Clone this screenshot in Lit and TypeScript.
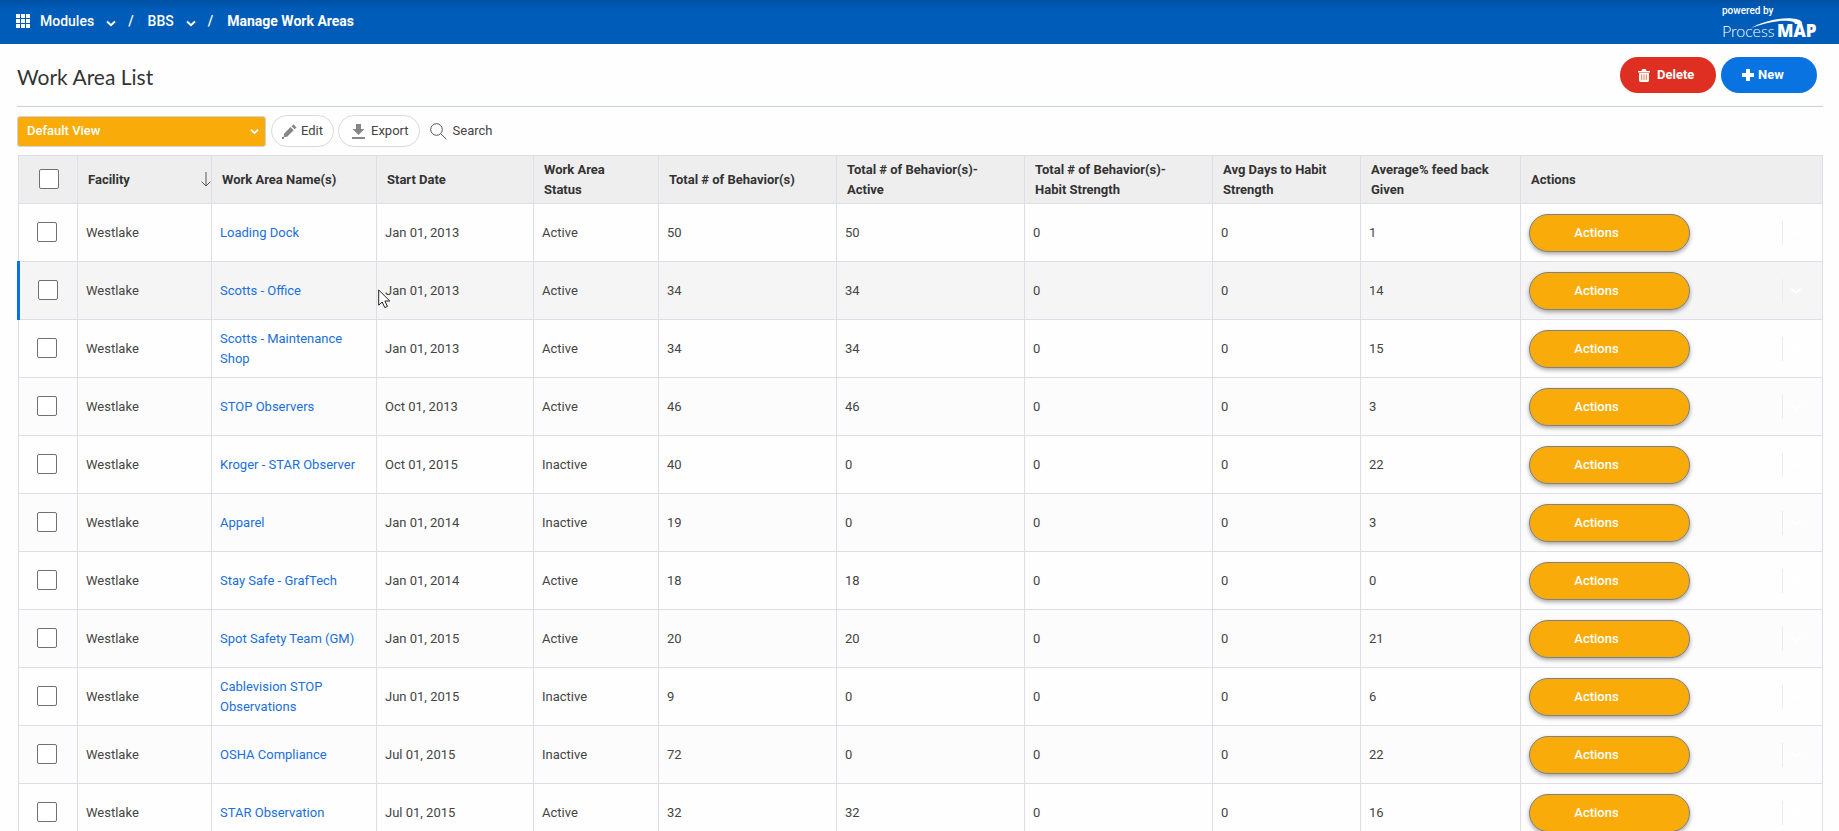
import { LitElement, html, svg, css } from "lit";
import { customElement, state } from "lit/decorators.js";
import { classMap } from "lit/directives/class-map.js";

interface WorkArea {
  name: string;
  start: string;
  status: string;
  total: number;
  active: number;
  feedback: number;
}

const area = (
  name: string,
  start: string,
  status: string,
  total: number,
  active: number,
  feedback: number
): WorkArea => ({ name, start, status, total, active, feedback });

const AREAS: WorkArea[] = [
  area("Loading Dock", "Jan 01, 2013", "Active", 50, 50, 1),
  area("Scotts - Office", "Jan 01, 2013", "Active", 34, 34, 14),
  area("Scotts - Maintenance Shop", "Jan 01, 2013", "Active", 34, 34, 15),
  area("STOP Observers", "Oct 01, 2013", "Active", 46, 46, 3),
  area("Kroger - STAR Observer", "Oct 01, 2015", "Inactive", 40, 0, 22),
  area("Apparel", "Jan 01, 2014", "Inactive", 19, 0, 3),
  area("Stay Safe - GrafTech", "Jan 01, 2014", "Active", 18, 18, 0),
  area("Spot Safety Team (GM)", "Jan 01, 2015", "Active", 20, 20, 21),
  area("Cablevision STOP Observations", "Jun 01, 2015", "Inactive", 9, 0, 6),
  area("OSHA Compliance", "Jul 01, 2015", "Inactive", 72, 0, 22),
  area("STAR Observation", "Jul 01, 2015", "Active", 32, 32, 16),
];

const chevron = svg`<path d="M1 1.5 L5 5.2 L9 1.5" fill="none" stroke="currentColor" stroke-width="2" />`;

@customElement("app-root")
export class AppRoot extends LitElement {
  @state() private hovered = 1;

  static styles = css`
    :host {
      display: block;
      height: 100vh;
      overflow: hidden;
      background: #fefefe;
      color: #444;
      font: 13px/20px Roboto, sans-serif;
    }
    button,
    select {
      font: inherit;
      margin: 0;
      cursor: pointer;
    }
    a {
      color: #1a6fdc;
      text-decoration: none;
    }
    svg {
      display: block;
      flex: none;
    }
    .topbar {
      display: flex;
      justify-content: space-between;
      height: 44px;
      padding: 0 16px;
      background: linear-gradient(#0051a4, #005cb9 10px);
      color: #fff;
    }
    .crumbs {
      display: flex;
      align-items: center;
      height: 42px;
      font-size: 14px;
      font-weight: 500;
    }
    .crumb {
      display: flex;
      align-items: center;
      gap: 12px;
      padding: 0;
      border: 0;
      background: none;
      color: inherit;
    }
    .crumb svg {
      margin-top: 4px;
    }
    .modules {
      margin-left: 10px;
    }
    .slash {
      margin: 0 14px 0 12px;
    }
    .here {
      font-weight: 700;
    }
    .brand {
      padding-top: 4px;
      width: 101px;
      font-size: 10px;
      font-weight: 500;
      line-height: 14px;
    }
    .page {
      padding: 0 16px 0 17px;
    }
    .titlebar {
      display: flex;
      align-items: center;
      justify-content: space-between;
      height: 62px;
      border-bottom: 1px solid #cbd0d4;
    }
    h1 {
      margin: 4px 0 0;
      font: 400 21px/28px Lato, sans-serif;
      color: #333;
    }
    .buttons {
      display: flex;
      gap: 5px;
      margin-right: 6px;
    }
    .pill {
      display: flex;
      align-items: center;
      height: 36px;
      width: 96px;
      padding: 0 18px;
      border: 0;
      border-radius: 18px;
      color: #fff;
      font-weight: 700;
    }
    .delete {
      gap: 7px;
      background: #df2e22;
    }
    .new {
      gap: 4px;
      padding-left: 21px;
      background: #0974e1;
    }
    .tools {
      display: flex;
      align-items: center;
      height: 48px;
    }
    .view {
      position: relative;
      width: 249px;
      margin-right: 5px;
    }
    .view select {
      appearance: none;
      display: block;
      width: 100%;
      height: 31px;
      padding: 0 9px;
      border: 1px solid #d3d3d8;
      border-radius: 3px;
      background: #f9ab0a;
      color: #fff;
      font-weight: 500;
    }
    .view svg {
      position: absolute;
      right: 7px;
      top: 12px;
      color: #fff;
      pointer-events: none;
    }
    .tool {
      display: flex;
      align-items: center;
      height: 32px;
      padding: 0 10px;
      margin-right: 4px;
      border: 1px solid #d8dbde;
      border-radius: 16px;
      background: #fff;
      color: #444;
    }
    .edit {
      gap: 4px;
    }
    .export {
      gap: 6px;
      padding: 0 10px 0 13px;
    }
    .search {
      gap: 6px;
      padding: 0 6px;
      border: 0;
      background: none;
    }
    table {
      width: 100%;
      table-layout: fixed;
      border-collapse: collapse;
    }
    th,
    td {
      box-sizing: border-box;
      border: 1px solid #dcdfe3;
      text-align: left;
      padding: 0 8px;
    }
    th {
      height: 48px;
      padding: 0 24px 0 10px;
      background: #eee;
      color: #333;
      font-weight: 700;
    }
    td {
      position: relative;
      height: 58px;
    }
    .check {
      width: 59px;
    }
    .facility {
      width: 134px;
    }
    .name {
      width: 165px;
    }
    .start {
      width: 157px;
    }
    .status {
      width: 125px;
    }
    .total {
      width: 178px;
    }
    .split {
      width: 188px;
    }
    .days {
      width: 148px;
    }
    .feedback {
      width: 160px;
    }
    th.check {
      padding: 0 0 2px 20px;
    }
    td.check {
      padding: 0 0 2px 18px;
    }
    .sorted {
      display: flex;
      align-items: center;
      justify-content: space-between;
    }
    th.facility {
      padding-right: 0;
    }
    input[type="checkbox"] {
      appearance: none;
      display: block;
      width: 20px;
      height: 20px;
      margin: 0;
      border: 1px solid #707070;
      border-radius: 2px;
      background: #fff;
    }
    tbody tr:nth-child(even) {
      background: #fcfcfc;
    }
    tbody tr.hover {
      background: #f5f5f5;
    }
    .hover td.check {
      border-left: 3px solid #0974e1;
    }
    .cell {
      display: flex;
      align-items: center;
      justify-content: space-between;
      padding-right: 12px;
    }
    .action {
      width: 161px;
      height: 38px;
      padding: 0 26px 0 0;
      border: 1px solid #7d8388;
      border-radius: 19px;
      background: #f9ab0a;
      box-shadow: 0 2px 4px rgba(0, 0, 0, 0.35);
      color: #fff;
      font-weight: 500;
    }
    .more {
      display: flex;
      align-items: center;
      height: 24px;
      padding: 0 0 0 7px;
      border: 0;
      border-left: 1px solid #e9ebed;
      background: none;
      color: #fff;
    }
    .pointer {
      position: absolute;
      left: 1px;
      top: 27px;
      z-index: 1;
    }
  `;

  private row(a: WorkArea, i: number) {
    return html`
      <tr
        class=${classMap({ hover: this.hovered === i })}
        @mouseenter=${() => (this.hovered = i)}
      >
        <td class="check"><input type="checkbox" aria-label=${"Select " + a.name} /></td>
        <td>Westlake</td>
        <td><a href="#">${a.name}</a></td>
        <td>
          ${a.start}
          ${i === 1
            ? html`<svg class="pointer" width="13" height="20" viewBox="0 0 13 20">
                <path
                  d="M.7 1 V16.2 L4.2 13 L6.8 18.6 L9.4 17.4 L6.9 12 H11.8 Z"
                  fill="#fff"
                  stroke="#222"
                />
              </svg>`
            : ""}
        </td>
        <td>${a.status}</td>
        <td>${a.total}</td>
        <td>${a.active}</td>
        <td>0</td>
        <td>0</td>
        <td>${a.feedback}</td>
        <td>
          <div class="cell">
            <button class="action">Actions</button>
            <button class="more" aria-label="More actions">
              <svg width="12" height="8" viewBox="0 0 10 7">${chevron}</svg>
            </button>
          </div>
        </td>
      </tr>
    `;
  }

  render() {
    return html`
      <header class="topbar">
        <nav class="crumbs">
          <svg width="14" height="14" viewBox="0 0 14 14" fill="#fff">
            ${[0, 5, 10].map((y) =>
              [0, 5, 10].map((x) => svg`<rect x=${x} y=${y} width="4" height="4" />`)
            )}
          </svg>
          <button class="crumb modules">
            Modules <svg width="10" height="7" viewBox="0 0 10 7">${chevron}</svg>
          </button>
          <span class="slash">/</span>
          <button class="crumb">
            BBS <svg width="10" height="7" viewBox="0 0 10 7">${chevron}</svg>
          </button>
          <span class="slash">/</span>
          <span class="here">Manage Work Areas</span>
        </nav>
        <div class="brand">
          powered by
          <svg width="101" height="26" viewBox="0 0 101 26" fill="#fff">
            <text x="0" y="19" font-family="Lato" font-weight="300" font-size="16">Process</text>
            <text x="55" y="19" font-family="Open Sans" font-weight="800" font-size="17">MAP</text>
            <path d="M29 10 C42 3 58 -.4 70 .4 C77 .9 81 3 80 6 L73 6 C73 4 69 2.800 63 2.800 C51 2.800 41 6 29 10 Z" />
          </svg>
        </div>
      </header>
      <main class="page">
        <div class="titlebar">
          <h1>Work Area List</h1>
          <div class="buttons">
            <button class="pill delete">
              <svg width="12" height="13" viewBox="0 0 12 13" fill="#fff">
                <path d="M0 2 H3.500 L4.300 0 H7.700 L8.500 2 H12 V3.400 H0 Z" />
                <path d="M1 4 H11 V11.600 Q11 13 9.600 13 H2.400 Q1 13 1 11.600 Z" />
                <path d="M3.700 5.300 V11.300 M6 5.300 V11.300 M8.300 5.300 V11.300" stroke="#e8805c" />
              </svg>
              Delete
            </button>
            <button class="pill new">
              <svg width="12" height="12" viewBox="0 0 12 12">
                <path d="M6 0 V12 M0 6 H12" stroke="#fff" stroke-width="4" />
              </svg>
              New
            </button>
          </div>
        </div>
        <div class="tools">
          <div class="view">
            <select aria-label="View">
              <option>Default View</option>
            </select>
            <svg width="9" height="7" viewBox="0 0 10 7">${chevron}</svg>
          </div>
          <button class="tool edit">
            <svg width="15" height="15" viewBox="0 0 15 15" fill="#858886">
              <path d="M2 9.700 L8.600 3.100 L11.700 6.200 L5.100 12.800 L1.700 13.300 Z" />
              <path d="M9.500 2.200 L11.500 .3 L14.600 3.400 L12.600 5.300 Z" />
              <rect y="13" width="2" height="2" />
            </svg>
            Edit
          </button>
          <button class="tool export">
            <svg width="13" height="15" viewBox="0 0 13 15" fill="#858886">
              <path d="M4 0 H9 V5 H12.500 L6.500 11 L.5 5 H4 Z" />
              <rect y="13" width="13" height="2" />
            </svg>
            Export
          </button>
          <button class="tool search">
            <svg width="17" height="17" viewBox="0 0 17 17" fill="none" stroke="#555">
              <circle cx="6.500" cy="6.500" r="5.800" />
              <path d="M10.700 10.700 L16.500 16.300" />
            </svg>
            Search
          </button>
        </div>
        <table>
          <thead>
            <tr>
              <th class="check"><input type="checkbox" aria-label="Select all" /></th>
              <th class="facility">
                <div class="sorted">
                  Facility
                  <svg width="10" height="16" viewBox="0 0 10 16" fill="none" stroke="#555">
                    <path d="M5 0 V14 M.6 9.700 L5 14 L9.400 9.700" />
                  </svg>
                </div>
              </th>
              <th class="name">Work Area Name(s)</th>
              <th class="start">Start Date</th>
              <th class="status">Work Area Status</th>
              <th class="total">Total # of Behavior(s)</th>
              <th class="split">Total # of Behavior(s)- Active</th>
              <th class="split">Total # of Behavior(s)- Habit Strength</th>
              <th class="days">Avg Days to Habit Strength</th>
              <th class="feedback">Average% feed back Given</th>
              <th>Actions</th>
            </tr>
          </thead>
          <tbody>
            ${AREAS.map((a, i) => this.row(a, i))}
          </tbody>
        </table>
      </main>
    `;
  }
}
